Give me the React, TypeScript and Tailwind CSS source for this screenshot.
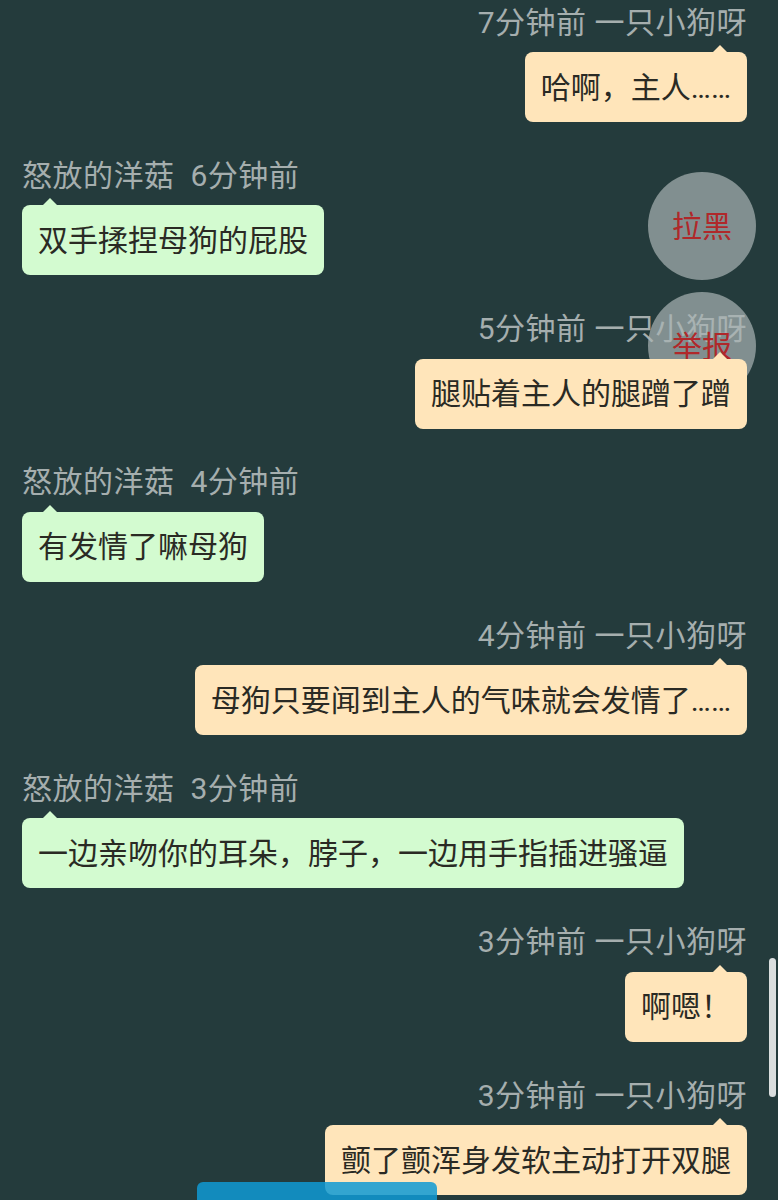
import React from "react";

type Msg = { side: "left" | "right"; meta: string; text: string };

const messages: Msg[] = [
  { side: "right", meta: "7分钟前 一只小狗呀", text: "哈啊，主人……" },
  { side: "left", meta: "怒放的洋菇\u00a0\u00a06分钟前", text: "双手揉捏母狗的屁股" },
  { side: "right", meta: "5分钟前 一只小狗呀", text: "腿贴着主人的腿蹭了蹭" },
  { side: "left", meta: "怒放的洋菇\u00a0\u00a04分钟前", text: "有发情了嘛母狗" },
  { side: "right", meta: "4分钟前 一只小狗呀", text: "母狗只要闻到主人的气味就会发情了……" },
  { side: "left", meta: "怒放的洋菇\u00a0\u00a03分钟前", text: "一边亲吻你的耳朵，脖子，一边用手指插进骚逼" },
  { side: "right", meta: "3分钟前 一只小狗呀", text: "啊嗯！" },
  { side: "right", meta: "3分钟前 一只小狗呀", text: "颤了颤浑身发软主动打开双腿" },
];

function Bubble({ msg }: { msg: Msg }) {
  const right = msg.side === "right";
  return (
    <div className={`flex flex-col ${right ? "items-end" : "items-start"}`}>
      <div className="text-[30px] leading-[36px] tracking-[0.5px] text-[#a5aeae] whitespace-nowrap">{msg.meta}</div>
      <div
        className={`relative z-10 mt-[11.5px] h-[70px] flex items-center px-4 rounded-lg text-[30px] text-[#2a2a24] whitespace-nowrap ${
          right ? "bg-[#ffe5ba]" : "bg-[#d3fbd0]"
        }`}
      >
        <span
          className={`absolute -top-[7px] w-0 h-0 border-x-[7px] border-x-transparent border-b-[7px] ${
            right ? "right-[20px] border-b-[#ffe5ba]" : "left-[21px] border-b-[#d3fbd0]"
          }`}
        />
        {msg.text}
      </div>
    </div>
  );
}

export default function App() {
  return (
    <div
      className="relative w-[778px] h-[1200px] overflow-hidden bg-[#243b3c]"
      style={{ fontFamily: "Roboto, 'Noto Sans CJK SC', sans-serif" }}
    >
      <div className="flex flex-col gap-[35.8px] pt-[4.5px] pl-[22px] pr-[31px]">
        {messages.map((m, i) => (
          <Bubble key={i} msg={m} />
        ))}
      </div>

      {/* floating actions */}
      <div className="absolute z-[5] left-[648px] top-[172px] flex flex-col gap-3">
        <div className="w-[108px] h-[108px] rounded-full bg-[#a9b3b3]/70 flex items-center justify-center text-[30px] text-[#b0282a]">
          拉黑
        </div>
        <div className="w-[108px] h-[108px] rounded-full bg-[#a9b3b3]/70 flex items-center justify-center text-[30px] text-[#b0282a]">
          举报
        </div>
      </div>

      {/* scrollbar */}
      <div className="absolute left-[769px] top-[958px] w-[7px] h-[139px] rounded-full bg-[#dadede]" />

      {/* bottom blue bar */}
      <div className="absolute z-20 left-[197px] top-[1182px] w-[240px] h-[30px] rounded-t-md bg-[#0f9ad4]/85" />
    </div>
  );
}
